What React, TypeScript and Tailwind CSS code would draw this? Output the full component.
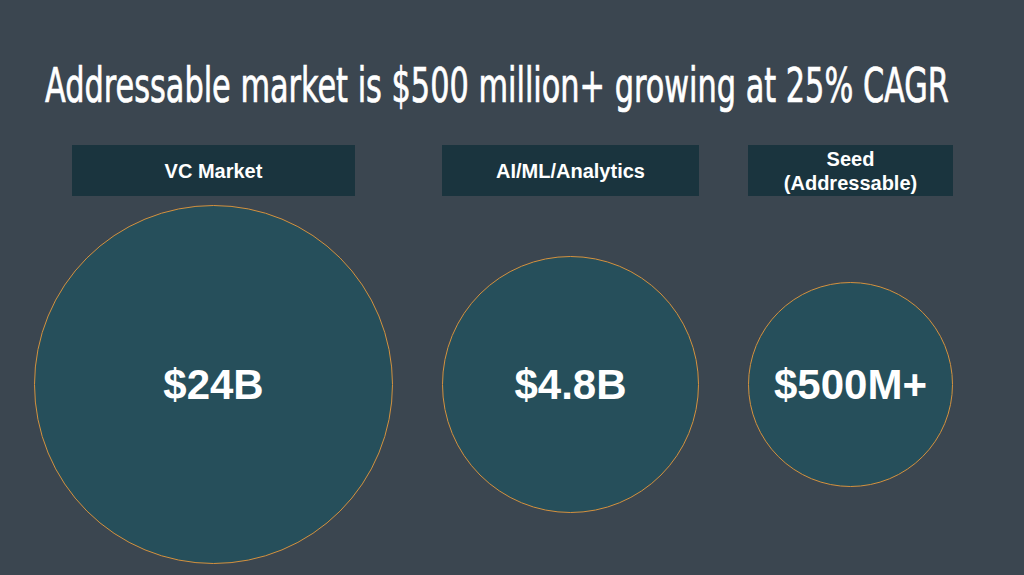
const markets = [
  { label: ["VC Market"], value: "$24B", col: "w-[359px]", box: "w-[283px]", size: "w-[359px] h-[359px]" },
  { label: ["AI/ML/Analytics"], value: "$4.8B", col: "w-[257px]", box: "w-[257px]", size: "w-[257px] h-[257px]" },
  { label: ["Seed", "(Addressable)"], value: "$500M+", col: "w-[205px]", box: "w-[205px]", size: "w-[205px] h-[205px]" },
];

export default function App() {
  return (
    <div className="w-[1024px] h-[575px] overflow-hidden bg-[#3b4650] text-white">
      <div className="h-[145px] pt-[61px] pl-[45px]">
        <h1
          className="inline-block origin-left scale-x-[0.703] whitespace-nowrap text-[48px] leading-[48px] font-normal [-webkit-text-stroke:0.7px_white]"
          style={{ fontFamily: '"DejaVu Sans Condensed", "DejaVu Sans", sans-serif' }}
        >
          Addressable market is $500 million+ growing at 25% CAGR
        </h1>
      </div>

      <div className="flex gap-[49px] pl-[34px]" style={{ fontFamily: '"Liberation Sans", Arial, sans-serif' }}>
        {markets.map((m) => (
          <div key={m.value} className={`flex flex-col items-center ${m.col}`}>
            <div className={`flex h-[51px] flex-col items-center justify-center bg-[#1a343e] text-center text-[20px] font-bold leading-[24px] ${m.box}`}>
              {m.label.map((l) => (
                <span key={l}>{l}</span>
              ))}
            </div>
            <div className="flex h-[377px] w-full items-center justify-center">
              <div className={`flex items-center justify-center rounded-full border border-[#d4913e] bg-[#264f5b] ${m.size}`}>
                <span className="text-[42px] font-bold leading-none">{m.value}</span>
              </div>
            </div>
          </div>
        ))}
      </div>
    </div>
  );
}
